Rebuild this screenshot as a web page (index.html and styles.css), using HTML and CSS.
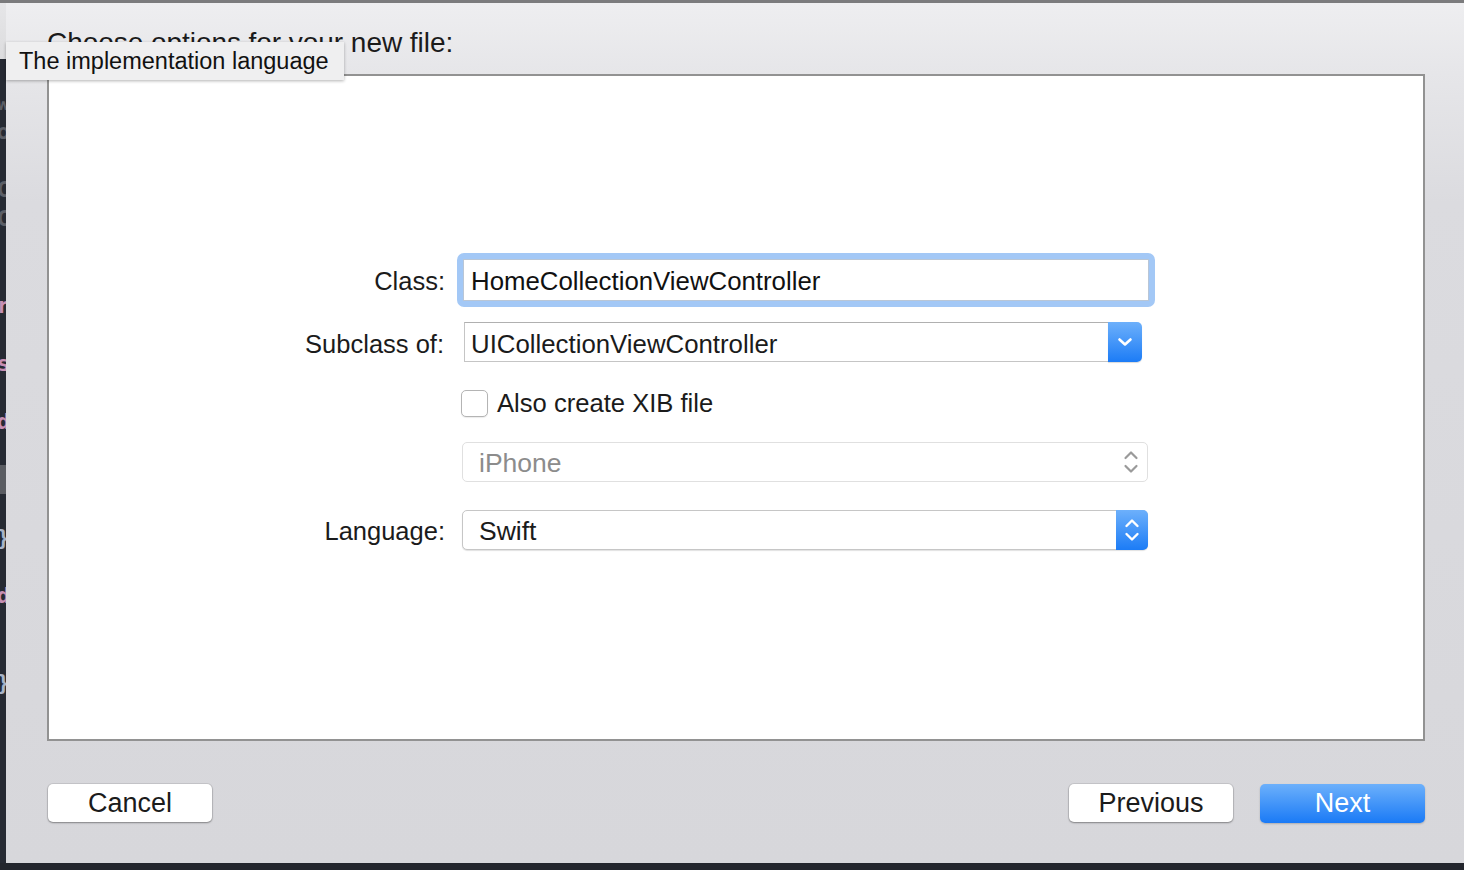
FILE: index.html
```html
<!DOCTYPE html>
<html>
<head>
<meta charset="utf-8">
<link rel="stylesheet" href="styles.css">
</head>
<body>
<div class="screen">
  <div class="topline"></div>
  <div class="main">
    <div class="editor-strip">
      <div class="code-top"></div>
      <div class="code-lines">
        <div class="cl"></div>
        <div class="cl gray"><span>w</span></div>
        <div class="cl gray"><span>o</span></div>
        <div class="cl"></div>
        <div class="cl gray"><span>C</span></div>
        <div class="cl gray"><span>C</span></div>
        <div class="cl"></div>
        <div class="cl"></div>
        <div class="cl pink"><span>r</span></div>
        <div class="cl"></div>
        <div class="cl pink"><span>s</span></div>
        <div class="cl"></div>
        <div class="cl pink"><span>d</span></div>
        <div class="cl"></div>
        <div class="cl hl"></div>
        <div class="cl"></div>
        <div class="cl blue"><span>}</span></div>
        <div class="cl"></div>
        <div class="cl pink"><span>d</span></div>
        <div class="cl"></div>
        <div class="cl"></div>
        <div class="cl blue"><span>}</span></div>
      </div>
    </div>
    <div class="sheet">
      <h1 class="title">Choose options for your new file:</h1>
      <div class="panel">
        <div class="form">
          <div class="row row-class">
            <label class="lbl">Class:</label>
            <div class="focus-ring">
              <div class="textfield">HomeCollectionViewController</div>
            </div>
          </div>
          <div class="row row-sub">
            <label class="lbl">Subclass of:</label>
            <div class="combo">
              <div class="combo-text">UICollectionViewController</div>
              <div class="combo-btn">
                <svg width="16" height="10" viewBox="0 0 16 10"><path d="M2.5 2.5 L8 7.5 L13.5 2.5" fill="none" stroke="#fff" stroke-width="2.6" stroke-linecap="round" stroke-linejoin="round"/></svg>
              </div>
            </div>
          </div>
          <div class="row row-check">
            <div class="lbl"></div>
            <div class="checkbox"></div>
            <span class="check-text">Also create XIB file</span>
          </div>
          <div class="row row-device">
            <div class="lbl"></div>
            <div class="popup disabled">
              <div class="popup-text">iPhone</div>
              <div class="popup-arrows">
                <svg width="16" height="26" viewBox="0 0 16 26"><path d="M2.5 9 L8 3.5 L13.5 9 M2.5 17 L8 22.5 L13.5 17" fill="none" stroke="#9a9a9a" stroke-width="2.2" stroke-linecap="round" stroke-linejoin="round"/></svg>
              </div>
            </div>
          </div>
          <div class="row row-lang">
            <label class="lbl">Language:</label>
            <div class="popup">
              <div class="popup-text">Swift</div>
              <div class="popup-btn">
                <svg width="16" height="26" viewBox="0 0 16 26"><path d="M2.5 9 L8 3.5 L13.5 9 M2.5 17 L8 22.5 L13.5 17" fill="none" stroke="#fff" stroke-width="2.4" stroke-linecap="round" stroke-linejoin="round"/></svg>
              </div>
            </div>
          </div>
        </div>
      </div>
      <div class="buttons">
        <button class="btn">Cancel</button>
        <div class="spacer"></div>
        <button class="btn">Previous</button>
        <button class="btn primary">Next</button>
      </div>
    </div>
  </div>
  <div class="bottombar"></div>
</div>
<div class="tooltip">The implementation language</div>
</body>
</html>
```
FILE: styles.css
```css
html, body {
  margin: 0;
  padding: 0;
}
body {
  width: 1464px;
  height: 870px;
  overflow: hidden;
  font-family: "Liberation Sans", Arial, sans-serif;
  color: #1b1b1b;
  position: relative;
  background: #24272e;
}
.screen {
  display: flex;
  flex-direction: column;
  height: 870px;
}
.topline {
  height: 3px;
  background: #7b7b7d;
  flex: none;
}
.main {
  display: flex;
  height: 860px;
  flex: none;
}
.bottombar {
  height: 7px;
  background: #23262d;
  flex: none;
}
.editor-strip {
  width: 6px;
  flex: none;
  background: #262a33;
  display: flex;
  flex-direction: column;
  overflow: hidden;
}
.code-top {
  height: 56px;
  flex: none;
  background: linear-gradient(#e6e6e8, #dcdcde);
}
.code-lines {
  display: flex;
  flex-direction: column;
}
.cl {
  height: 29px;
  display: flex;
  justify-content: flex-end;
  align-items: center;
  font-family: "DejaVu Sans Mono", monospace;
  font-size: 22px;
  font-weight: bold;
}
.cl span {
  margin-right: -4px;
}
.cl.gray { color: #5b5e66; }
.cl.pink { color: #c78fb4; }
.cl.blue { color: #a8b4c8; }
.cl.hl { background: #5a5c62; }

.sheet {
  flex: 1;
  display: flex;
  flex-direction: column;
  padding: 0 39px 0 41px;
  background: linear-gradient(#eeeef0 0px, #e6e6e9 70px, #dbdbdf 200px, #d7d7db 100%);
}
.title {
  margin: 26px 0 17px 0;
  font-size: 28px;
  line-height: 28px;
  font-weight: normal;
  color: #1b1b1b;
  height: 28px;
  letter-spacing: -0.05px;
}
.panel {
  height: 667px;
  box-sizing: border-box;
  border: 2px solid #929292;
  background: #ffffff;
  flex: none;
}
.form {
  padding-top: 177px;
  display: flex;
  flex-direction: column;
}
.row {
  display: flex;
  align-items: center;
}
.lbl {
  width: 395px;
  flex: none;
  text-align: right;
  font-size: 25.5px;
  color: #1b1b1b;
}
.row-class {
  height: 54px;
}
.row-class .lbl {
  padding-top: 2px;
  margin-left: 1px;
}
.focus-ring {
  margin-left: 12px;
  width: 698px;
  height: 54px;
  box-sizing: border-box;
  padding: 6px;
  border-radius: 7px;
  background: #a3c8f6;
}
.textfield {
  height: 42px;
  box-sizing: border-box;
  border: 1px solid #b9c6d6;
  background: #fff;
  display: flex;
  align-items: center;
  padding-left: 7px;
  padding-top: 2px;
  font-size: 25.8px;
  color: #111;
}
.row-sub {
  margin-top: 15px;
  height: 40px;
}
.row-sub .lbl {
  padding-top: 5px;
}
.combo {
  margin-left: 20px;
  width: 678px;
  height: 40px;
  display: flex;
}
.combo-text {
  flex: 1;
  box-sizing: border-box;
  border: 1px solid #c5c5c5;
  border-top-color: #b0b0b0;
  border-right: none;
  display: flex;
  align-items: center;
  padding-left: 6px;
  padding-top: 5px;
  font-size: 25.8px;
  color: #1b1b1b;
  background: #fff;
}
.combo-btn {
  width: 34px;
  flex: none;
  border-radius: 0 5px 5px 0;
  background: linear-gradient(#6db0fb, #1c7cf6);
  display: flex;
  align-items: center;
  justify-content: center;
  box-shadow: 0 1px 1px rgba(0,0,0,0.15);
}
.row-check {
  margin-top: 28px;
  height: 27px;
}
.checkbox {
  margin-left: 17px;
  width: 27px;
  height: 27px;
  box-sizing: border-box;
  border: 1px solid #b4b4b4;
  border-radius: 5px;
  background: #fff;
  box-shadow: 0 1px 1px rgba(0,0,0,0.08);
  flex: none;
}
.check-text {
  margin-left: 9px;
  font-size: 25.6px;
  color: #1b1b1b;
}
.row-device {
  margin-top: 25px;
  height: 40px;
}
.row-lang {
  margin-top: 28px;
  height: 40px;
}
.row-lang .lbl {
  padding-top: 2px;
  margin-left: 1px;
}
.popup {
  margin-left: 18px;
  width: 686px;
  height: 40px;
  box-sizing: border-box;
  border: 1px solid #c6c6c6;
  border-radius: 5px;
  display: flex;
  background: #fff;
  box-shadow: 0 1px 1px rgba(0,0,0,0.12);
}
.row-lang .popup {
  margin-left: 17px;
}
.popup.disabled {
  border-color: #e0e0e0;
  box-shadow: none;
}
.popup-text {
  flex: 1;
  display: flex;
  align-items: center;
  padding-left: 16px;
  padding-top: 2px;
  font-size: 26.5px;
  color: #1b1b1b;
}
.popup.disabled .popup-text {
  color: #8c8c8c;
}
.popup-arrows {
  width: 32px;
  display: flex;
  align-items: center;
  justify-content: center;
}
.popup-btn {
  width: 32px;
  margin: -1px -1px -1px 0;
  border-radius: 0 5px 5px 0;
  background: linear-gradient(#6db0fb, #1c7cf6);
  display: flex;
  align-items: center;
  justify-content: center;
}
.buttons {
  margin-top: 42px;
  display: flex;
  align-items: center;
  height: 40px;
}
.spacer {
  flex: 1;
}
.btn {
  width: 164px;
  height: 38px;
  margin: 0;
  padding: 0;
  border: none;
  border-radius: 5px;
  background: #fff;
  font-family: "Liberation Sans", Arial, sans-serif;
  font-size: 27px;
  color: #1b1b1b;
  box-shadow: 0 0 0 1px rgba(0,0,0,0.08), 0 1px 2px rgba(0,0,0,0.35);
}
.btn:first-child {
  margin-left: 1px;
}
.btn.primary {
  margin-left: 27px;
  width: 165px;
  height: 39px;
  background: linear-gradient(#6cb0fb, #1a7af6);
  color: #fff;
  box-shadow: 0 1px 2px rgba(0,0,0,0.2);
}
.tooltip {
  position: absolute;
  left: 6px;
  top: 42px;
  width: 338px;
  height: 38px;
  box-sizing: border-box;
  padding-left: 13px;
  display: flex;
  align-items: center;
  background: #efeff0;
  font-size: 23.5px;
  color: #111;
  box-shadow: 0 1px 3px rgba(0,0,0,0.3);
}
```
